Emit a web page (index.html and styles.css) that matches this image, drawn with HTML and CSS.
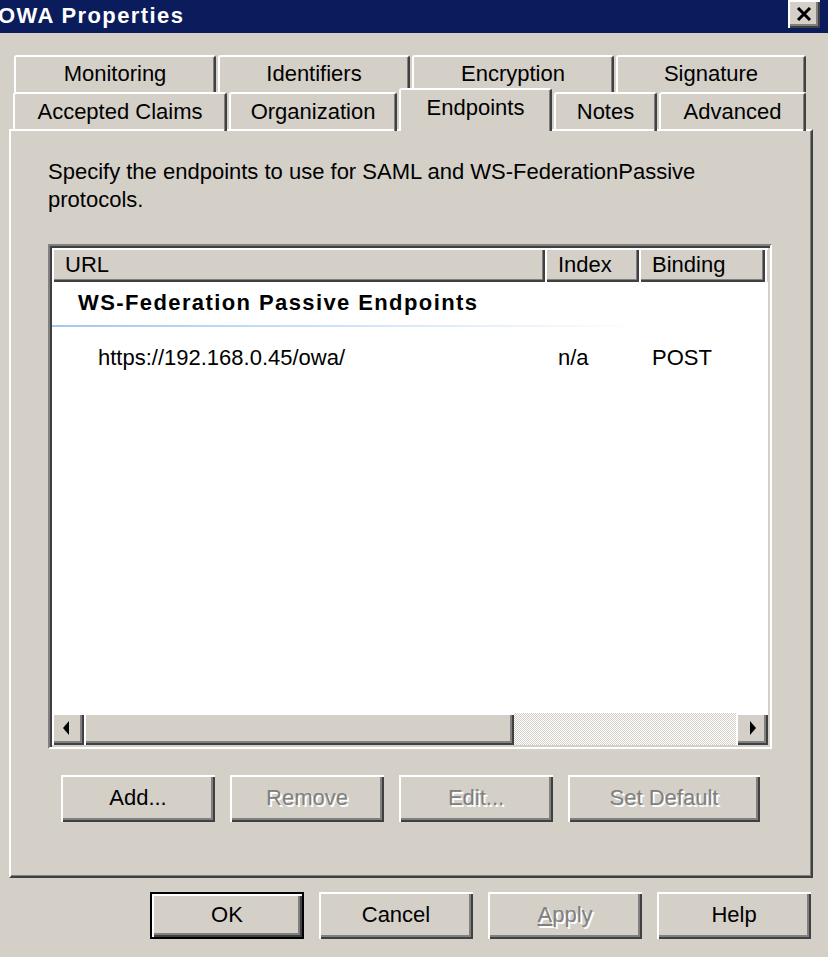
FILE: index.html
```html
<!DOCTYPE html>
<html lang="en">
<head>
    <meta charset="UTF-8">
    <title>OWA Properties</title>
    <link rel="stylesheet" href="styles.css">
</head>
<body>
    <div class="window">
        <div class="titlebar">
            <span class="title">OWA Properties</span>
            <button class="close">
                <svg width="16" height="14" viewBox="0 0 16 14">
                    <path d="M2 1 L14 13 M14 1 L2 13" stroke="#000" stroke-width="3" fill="none"/>
                </svg>
            </button>
        </div>

        <div class="tabs">
            <div class="tab-row row-back">
                <div class="tab">Monitoring</div>
                <div class="tab">Identifiers</div>
                <div class="tab">Encryption</div>
                <div class="tab">Signature</div>
            </div>
            <div class="tab-row row-front">
                <div class="tab">Accepted Claims</div>
                <div class="tab">Organization</div>
                <div class="tab active">Endpoints</div>
                <div class="tab">Notes</div>
                <div class="tab">Advanced</div>
            </div>
        </div>

        <div class="panel">
            <p class="desc">Specify the endpoints to use for SAML and WS-FederationPassive<br>protocols.</p>

            <div class="listview">
                <div class="lv-header">
                    <div class="col">URL</div>
                    <div class="col">Index</div>
                    <div class="col">Binding</div>
                    <div class="col filler"></div>
                </div>
                <div class="lv-body">
                    <div class="group">WS-Federation Passive Endpoints</div>
                    <div class="group-line"></div>
                    <div class="row">
                        <span class="cell url">https://192.168.0.45/owa/</span>
                        <span class="cell">n/a</span>
                        <span class="cell">POST</span>
                    </div>
                </div>
                <div class="hscroll">
                    <div class="sb-btn"><span class="arrow-left"></span></div>
                    <div class="sb-thumb"></div>
                    <div class="sb-track"></div>
                    <div class="sb-btn"><span class="arrow-right"></span></div>
                </div>
            </div>

            <div class="panel-buttons">
                <button class="btn">Add...</button>
                <button class="btn disabled">Remove</button>
                <button class="btn disabled">Edit...</button>
                <button class="btn disabled wide">Set Default</button>
            </div>
        </div>

        <div class="footer">
            <button class="btn default">OK</button>
            <button class="btn">Cancel</button>
            <button class="btn disabled"><span><u>A</u>pply</span></button>
            <button class="btn">Help</button>
        </div>
    </div>
</body>
</html>
```

FILE: styles.css
```css
body {
    margin: 0;
    background-color: #d4d0c8;
    font-family: "Liberation Sans", Arial, sans-serif;
    font-size: 22px;
    color: #000;
}

.window {
    width: 828px;
    height: 957px;
    overflow: hidden;
}

/* title bar */
.titlebar {
    height: 33px;
    background-color: #0b1c5c;
    display: flex;
    justify-content: space-between;
    align-items: flex-start;
    padding-right: 8px;
}

.title {
    color: #fff;
    font-weight: bold;
    font-size: 22px;
    letter-spacing: 1.4px;
    line-height: 31px;
    margin-left: -2px;
}

.close {
    width: 32px;
    height: 28px;
    padding: 0;
    border: none;
    background-color: #d4d0c8;
    box-shadow: inset 2px 2px #fff, inset -2px -2px #404040, inset -4px -4px #808080;
    display: flex;
    align-items: center;
    justify-content: center;
}

/* tabs */
.tabs {
    margin-top: 22px;
}

.tab-row {
    display: grid;
    height: 37px;
    column-gap: 2px;
}

.row-back {
    grid-template-columns: 202px 192px 202px 190px;
    padding-left: 14px;
}

.row-front {
    grid-template-columns: 214px 168px 153px 103px 147px;
    padding-left: 13px;
}

.tab {
    box-sizing: border-box;
    border-top: 2px solid #fff;
    border-left: 2px solid #fff;
    border-right: 2px solid #404040;
    border-radius: 3px 3px 0 0;
    box-shadow: inset -1px 0 #808080;
    display: flex;
    align-items: center;
    justify-content: center;
    padding-bottom: 2px;
}

.tab.active {
    position: relative;
    z-index: 1;
    align-self: start;
    height: 43px;
    margin-top: -4px;
    background-color: #d4d0c8;
    padding-bottom: 6px;
}

/* property page */
.panel {
    box-sizing: border-box;
    width: 804px;
    height: 749px;
    margin-left: 9px;
    border: 2px solid;
    border-color: #fff #404040 #404040 #fff;
    box-shadow: inset -1px -1px #808080;
    padding: 27px 0 0 37px;
}

.desc {
    margin: 0;
    line-height: 28px;
}

.listview {
    box-sizing: border-box;
    width: 724px;
    height: 505px;
    margin-top: 30px;
    border: 2px solid;
    border-color: #808080 #fff #fff #808080;
    box-shadow: inset 2px 2px #404040, inset -2px -2px #d4d0c8;
    padding: 2px;
    display: flex;
    flex-direction: column;
}

.lv-header {
    display: grid;
    grid-template-columns: 493px 94px 126px 3px;
    height: 34px;
    background-color: #d4d0c8;
}

.col {
    box-shadow: inset 2px 2px #fff, inset -2px -2px #404040, inset -3px -3px #808080;
    padding-left: 13px;
    line-height: 34px;
}

.col.filler {
    padding: 0;
    box-shadow: inset 2px 2px #fff;
}

.lv-body {
    flex: 1;
    background-color: #fff;
}

.group {
    box-sizing: border-box;
    height: 43px;
    padding: 8px 0 0 26px;
    line-height: 26px;
    font-weight: bold;
    letter-spacing: 1.4px;
}

.group-line {
    width: 590px;
    height: 2px;
    background: linear-gradient(90deg, #a4c6f0, #fff);
}

.row {
    display: grid;
    grid-template-columns: 493px 94px 126px;
    margin-top: 17px;
    line-height: 28px;
}

.cell {
    padding-left: 13px;
}

.cell.url {
    padding-left: 46px;
}

/* horizontal scrollbar */
.hscroll {
    display: flex;
    height: 32px;
}

.sb-btn,
.sb-thumb {
    box-sizing: border-box;
    background-color: #d4d0c8;
    box-shadow: inset 2px 2px #fff, inset -2px -2px #404040, inset -4px -4px #808080;
}

.sb-btn {
    width: 32px;
    display: flex;
    align-items: center;
    justify-content: center;
}

.sb-thumb {
    width: 430px;
}

.sb-track {
    flex: 1;
    background: repeating-conic-gradient(#d4d0c8 0 25%, #fff 0 50%) 0 0 / 2px 2px;
}

.arrow-left,
.arrow-right {
    width: 0;
    height: 0;
    border-top: 7px solid transparent;
    border-bottom: 7px solid transparent;
    margin-bottom: 2px;
}

.arrow-left {
    border-right: 6px solid #000;
    margin-right: 4px;
}

.arrow-right {
    border-left: 6px solid #000;
    margin-left: 2px;
}

/* buttons */
.btn {
    box-sizing: border-box;
    width: 154px;
    height: 47px;
    padding: 0 0 2px;
    border: none;
    background-color: #d4d0c8;
    box-shadow: inset 2px 2px #fff, inset -2px -2px #404040, inset -4px -4px #808080;
    font-family: inherit;
    font-size: 22px;
    color: #000;
}

.btn.wide {
    width: 192px;
}

.btn.disabled {
    color: #808080;
    text-shadow: 2px 2px #fff;
}

.btn.default {
    border: 2px solid #000;
}

.panel-buttons {
    display: flex;
    gap: 15px;
    margin-top: 26px;
    margin-left: 13px;
}

.footer {
    display: flex;
    justify-content: flex-end;
    gap: 15px;
    margin-top: 14px;
    padding-right: 17px;
}
```
